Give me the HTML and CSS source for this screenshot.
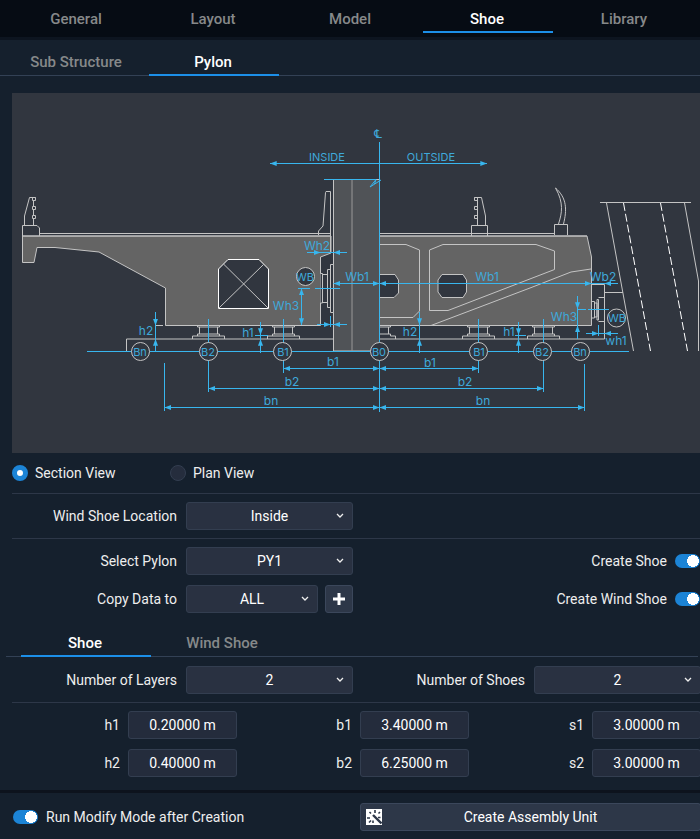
FILE: index.html
```html
<!DOCTYPE html>
<html lang="en">
<head>
    <meta charset="UTF-8">
    <meta name="viewport" content="width=device-width, initial-scale=1.0">
    <title>Shoe - Pylon</title>
    <link rel="stylesheet" href="styles.css">
</head>

<body>

    <nav class="main-tabs">
        <button class="tab">General</button>
        <button class="tab">Layout</button>
        <button class="tab">Model</button>
        <button class="tab active">Shoe</button>
        <button class="tab">Library</button>
    </nav>

    <nav class="sub-tabs">
        <button class="tab">Sub Structure</button>
        <button class="tab active">Pylon</button>
    </nav>

    <main class="content">
        <svg class="diagram" viewBox="12 93 688 360" role="img" aria-label="Pylon section view">
            <defs>
                <marker id="arrow" viewBox="0 0 8 6" refX="8" refY="3" markerWidth="7" markerHeight="5" markerUnits="userSpaceOnUse" orient="auto-start-reverse">
                    <path d="M0 0L8 3L0 6Z" fill="#38b6ee"/>
                </marker>
                <g id="bearing">
                    <path d="M-11 0V1H11V0M-9 1V8M9 1V8M-11 10V8H11V10M-16 13V10H16V13"/>
                </g>
            </defs>

            <!-- deck -->
            <g class="outline">
                <path class="concrete" d="M22.5 236V262.5H34L37 247.5H55L99 252L165.5 288V325.5H320.5V257L331 253V236Z"/>
                <path class="concrete" d="M379.5 236H587L591.5 257V325.5H379.5Z"/>
                <path d="M39.5 233.5H331M379.5 233.5H554.5M22.5 236H331M379.5 236H587"/>
                <path class="pylon" d="M333.5 351V179.5H379.5V351Z"/>
                <path class="pylon-edge" d="M352 180V351"/>
            </g>

            <!-- openings -->
            <g class="outline">
                <path class="opening bright" d="M218.5 308.5V269L228 259.5H259L268.5 269V308.5Z"/>
                <path d="M218.5 308.5L263.5 264.5M223.5 264L268.5 308.5"/>
                <path d="M379.5 244.5H406L419.5 250V311L413 317.5H379.5"/>
                <path d="M429.5 310.5V250L443 244.5H536L554.5 251V269.5L448 310.5Z"/>
                <path d="M431 325.5L530 288L571 272L591 269"/>
                <path class="opening" d="M379.5 274.5H395L398.5 280V293L394 297.5H379.5"/>
                <path class="opening" d="M438 280L442 274.5H463L466.5 280V292L463 297.5H442L438 292Z"/>
            </g>

            <!-- barriers -->
            <g class="outline">
                <path d="M22.5 236V225.5H37L39.5 228V236M24.5 225V216L29.5 197.5H35.5M33.5 201V206M33.5 210V215M33.5 219V225"/>
                <path d="M32.5 197.5H35.5V200.5H32.5ZM32.5 206.5H35.5V209.5H32.5ZM32.5 215.5H35.5V218.5H32.5Z"/>
                <path d="M318.5 235V231L323 226L325.5 192.5L326 191.5H330.5V253"/>
                <path d="M471.5 236V225.5H487.5V236M485.5 225V216L481.5 197.5H474.5M477.5 198V225"/>
                <path d="M474.5 197.5H477.5V200.5H474.5ZM474.5 206.5H477.5V209.5H474.5ZM474.5 215.5H477.5V218.5H474.5Z"/>
                <path d="M554.5 235V224.5H567.5V235M558.5 224C562 213 564 203 555.5 188C567 198 567 210 563.5 224"/>
            </g>

            <!-- platform, bearings and wind shoes -->
            <g class="outline">
                <path d="M126.5 351V339H333M379.5 339H604.5V284.5H591.5M604.5 292.5H623"/>
                <use href="#bearing" x="208.5" y="326"/>
                <use href="#bearing" x="283.5" y="326"/>
                <use href="#bearing" x="478.5" y="326"/>
                <use href="#bearing" x="543.5" y="326"/>
                <path d="M390.5 326V327H380M388.5 327V334M380 334H390.5V336H395.5V339"/>
                <path class="opening" d="M320.5 273.5H322.5V303H320.5M322.5 274.5H327.5V302.5H322.5M327.5 269.5H330.5V307.5H327.5ZM330.5 264.5H333.5V312.5H330.5Z"/>
                <path d="M591.5 301.5H594.5V318H591.5M594.5 303H597V317H594.5M597 299.5H598.5V320H597ZM598.5 297.5H604.5V321.5H598.5"/>
            </g>

            <!-- stay cables -->
            <g class="outline">
                <path d="M600 202.5H691M606.5 203L633.5 351M684.5 203L698.5 281V351"/>
                <path class="cable" d="M623.5 203L650.5 351M660.5 203L687.5 351"/>
            </g>

            <!-- dimension lines -->
            <g class="dim">
                <path d="M379.5 142V412M324 179.5H376L370 187L381 180M374.5 184L376 179.5M87 351.5H629"/>
                <path d="M283.5 319V373M208.5 319V392M164.5 363V411M478.5 319V373M543.5 319V392M584.5 364V411"/>
                <path d="M298 288.5H310M315 288.5H340M330.5 316V327M255 335.5H268M515 335.5H526M577 309.5H586M588 309.5H609M598.5 325V336"/>
                <path d="M155.5 325V340M260.5 334V340M419.5 325V340M518.5 334V340M320 252.5H334M330 324.5H334M591 283.5H605M598 333.5H605M577.5 309V326"/>
            </g>
            <g class="dim both">
                <path d="M270 163.5H487"/>
                <path d="M333.5 283.5H379.5"/>
                <path d="M379.5 283.5H591.5"/>
                <path d="M283.5 368.5H379.5"/>
                <path d="M379.5 368.5H478.5"/>
                <path d="M208.5 388.5H379.5"/>
                <path d="M379.5 388.5H543.5"/>
                <path d="M164.5 407.5H379.5"/>
                <path d="M379.5 407.5H584.5"/>
                <path d="M301.5 288.5V325"/>
            </g>
            <g class="dim end">
                <path d="M307 252.5H320.5"/>
                <path d="M347 252.5H333.5"/>
                <path d="M317 324.5H330.5"/>
                <path d="M347 324.5H333.5"/>
                <path d="M155.5 312V325.5"/>
                <path d="M155.5 352V339"/>
                <path d="M260.5 322V335"/>
                <path d="M260.5 353V339"/>
                <path d="M419.5 312V325"/>
                <path d="M419.5 353V339"/>
                <path d="M518.5 322V335"/>
                <path d="M518.5 353V339"/>
                <path d="M618 283.5H604.5"/>
                <path d="M577.5 296V309"/>
                <path d="M577.5 339V325.5"/>
                <path d="M586 333.5H598.5"/>
                <path d="M618 333.5H604.5"/>
            </g>

            <g class="outline">
                <path d="M156 325.5H163"/>
            </g>

            <g class="node">
                <circle cx="140.5" cy="351.5" r="9"/>
                <circle cx="208.5" cy="351.5" r="9"/>
                <circle cx="282.5" cy="351.5" r="9"/>
                <circle cx="379.5" cy="351.5" r="9"/>
                <circle cx="478.5" cy="351.5" r="9"/>
                <circle cx="542.5" cy="351.5" r="9"/>
                <circle cx="580.5" cy="351.5" r="9"/>
                <circle cx="305.5" cy="276.5" r="9"/>
                <circle class="clear" cx="616.5" cy="318" r="9"/>
            </g>

            <g class="dim-text">
                <text class="centerline" x="378" y="138">℄</text>
                <text class="side" x="327" y="161">INSIDE</text>
                <text class="side" x="431" y="161">OUTSIDE</text>
                <text x="317" y="250">Wh2</text>
                <text x="357" y="281">Wb1</text>
                <text x="487" y="281">Wb1</text>
                <text x="603" y="281">Wb2</text>
                <text x="286" y="310">Wh3</text>
                <text x="564" y="321">Wh3</text>
                <text x="616" y="345">wh1</text>
                <text x="146" y="335">h2</text>
                <text x="248" y="337">h1</text>
                <text x="410" y="336">h2</text>
                <text x="509" y="336">h1</text>
                <text x="333" y="366">b1</text>
                <text x="430" y="367">b1</text>
                <text x="292" y="386">b2</text>
                <text x="465" y="386">b2</text>
                <text x="271" y="405">bn</text>
                <text x="483" y="405">bn</text>
                <text class="side" x="305" y="281">WB</text>
                <text class="side" x="617" y="322">WB</text>
                <text class="side" x="140" y="356">Bn</text>
                <text class="side" x="208" y="356">B2</text>
                <text class="side" x="283" y="356">B1</text>
                <text class="side" x="379" y="356">B0</text>
                <text class="side" x="479" y="356">B1</text>
                <text class="side" x="542" y="356">B2</text>
                <text class="side" x="580" y="356">Bn</text>
            </g>
        </svg>

        <div class="view-row">
            <label class="radio"><input type="radio" name="view" checked>Section View</label>
            <label class="radio"><input type="radio" name="view">Plan View</label>
        </div>

        <div class="row">
            <div class="field">
                <label for="wind-location">Wind Shoe Location</label>
                <select id="wind-location"><option>Inside</option><option>Outside</option></select>
            </div>
        </div>

        <div class="row pylon-row">
            <div class="field">
                <label for="select-pylon">Select Pylon</label>
                <select id="select-pylon"><option>PY1</option><option>PY2</option></select>
            </div>
            <label class="switch">Create Shoe<input type="checkbox" checked></label>
            <div class="field">
                <label for="copy-to">Copy Data to</label>
                <div class="copy">
                    <select id="copy-to"><option>ALL</option><option>PY2</option></select>
                    <button class="add-button" aria-label="Add">
                        <svg width="14" height="14" viewBox="0 0 14 14"><path d="M7 1V13M1 7H13" stroke="#fff" stroke-width="3"/></svg>
                    </button>
                </div>
            </div>
            <label class="switch">Create Wind Shoe<input type="checkbox" checked></label>
        </div>
    </main>

    <nav class="shoe-tabs">
        <button class="tab active">Shoe</button>
        <button class="tab">Wind Shoe</button>
    </nav>

    <section class="content">
        <div class="row">
            <div class="field">
                <label for="layers">Number of Layers</label>
                <select id="layers"><option>2</option><option>3</option></select>
            </div>
            <div class="field">
                <label for="shoes">Number of Shoes</label>
                <select id="shoes"><option>2</option><option>3</option></select>
            </div>
        </div>

        <div class="values">
            <div class="field"><label for="h1">h1</label><input type="text" id="h1" value="0.20000 m"></div>
            <div class="field"><label for="b1">b1</label><input type="text" id="b1" value="3.40000 m"></div>
            <div class="field"><label for="s1">s1</label><input type="text" id="s1" value="3.00000 m"></div>
            <div class="field"><label for="h2">h2</label><input type="text" id="h2" value="0.40000 m"></div>
            <div class="field"><label for="b2">b2</label><input type="text" id="b2" value="6.25000 m"></div>
            <div class="field"><label for="s2">s2</label><input type="text" id="s2" value="3.00000 m"></div>
        </div>
    </section>

    <footer>
        <label class="switch"><input type="checkbox" checked>Run Modify Mode after Creation</label>
        <button class="create-button">
            <svg width="16" height="16" viewBox="0 0 16 16">
                <path d="M0 0H16V16H0Z" fill="#fff"/>
                <path d="M7 6L15.5 14.5" stroke="#2d3748" stroke-width="2.4"/>
                <path d="M9 1V4M3.5 3L5 4.500M1 9H4M14 3L12.500 4.500M12 8.500H14.500M7 11.500V14M3 13.500L5 11.500" stroke="#2d3748" stroke-width="1.6"/>
            </svg>
            <span>Create Assembly Unit</span>
        </button>
    </footer>

</body>
</html>
```
FILE: styles.css
```css
* {
    box-sizing: border-box;
}
body {
    margin: 0;
    overflow-x: hidden;
    font-family: Roboto, sans-serif;
    font-size: 14px;
    background-color: #15202d;
    color: #eee;
}
button,
input,
select {
    font: inherit;
    color: #fff;
}

/* tabs */
.main-tabs,
.sub-tabs,
.shoe-tabs {
    display: flex;
    gap: 7px;
}
.main-tabs {
    height: 40px;
    padding: 7px 10px 4px 12px;
    background: #060c14;
    border-bottom: 3px solid #0d1520;
}
.sub-tabs {
    height: 36px;
    padding: 9px 12px 0;
    border-bottom: 1px solid #334155;
}
.shoe-tabs {
    height: 27px;
    margin: 9px 2px 0 6px;
    padding: 0 15px;
    border-bottom: 1px solid #334155;
}
.tab {
    width: 130px;
    padding: 0 2px 0 0;
    border: none;
    border-bottom: 2px solid transparent;
    background: none;
    color: #86898a;
    font-size: 15px;
    font-weight: 500;
    cursor: pointer;
}
.main-tabs .tab {
    flex: 1;
}
.sub-tabs .tab,
.shoe-tabs .tab {
    margin-bottom: -1px;
}
.tab.active {
    color: #fff;
    border-bottom-color: #1c8fe8;
}

/* the right edge of the fields runs under the window border */
.content {
    margin: 0 -1px 0 12px;
}
.diagram {
    display: block;
    width: calc(100% - 1px);
    margin-top: 17px;
    background: #31363f;
}
.outline {
    fill: none;
    stroke: #c4c4c4;
}
.concrete {
    fill: #646464;
}
.pylon {
    fill: #505357;
}
.pylon-edge {
    stroke: #999;
}
.opening {
    fill: #31363f;
}
.bright {
    stroke: #fff;
}
.cable {
    stroke: #fff;
    stroke-dasharray: 8 3;
}
.dim {
    fill: none;
    stroke: #38b6ee;
}
.both path {
    marker-start: url(#arrow);
    marker-end: url(#arrow);
}
.end path {
    marker-end: url(#arrow);
}
.node {
    fill: #31363f;
    stroke: #c4c4c4;
}
.node .clear {
    fill: none;
}
.dim-text {
    fill: #3fa9da;
    font-family: Inter, sans-serif;
    font-size: 12px;
    text-anchor: middle;
}
.dim-text .side {
    font-size: 11px;
}
.dim-text .centerline {
    font-family: "DejaVu Sans", sans-serif;
}

/* form rows */
.view-row {
    display: flex;
    height: 41px;
    border-bottom: 1px solid #2d3748;
}
.radio {
    display: flex;
    align-items: center;
    gap: 7px;
    width: 158px;
}
.radio input {
    appearance: none;
    width: 16px;
    height: 16px;
    margin: 0;
    border: 1px solid #333e50;
    border-radius: 50%;
    background: #252d3d;
}
.radio input:checked {
    border: 5px solid #1c84d6;
    background: #fff;
}
.row {
    display: grid;
    grid-template-columns: 1fr 1fr;
    gap: 10px 7px;
    padding: 8px 0;
    border-bottom: 1px solid #2d3748;
}
.pylon-row {
    border-bottom: none;
}
.content .row:first-child {
    padding-top: 9px;
}
.field {
    display: flex;
    align-items: center;
    justify-content: flex-end;
    gap: 9px;
}
select,
.field input {
    height: 28px;
    border: 1px solid #333e50;
    border-radius: 3px;
    background-color: #293141;
}
select {
    appearance: none;
    width: 167px;
    padding: 0 20px;
    text-align: center;
    text-align-last: center;
    background-image: url("data:image/svg+xml,%3Csvg xmlns='http://www.w3.org/2000/svg' width='8' height='6'%3E%3Cpath d='M1 1L4 4L7 1' fill='none' stroke='%23eee' stroke-width='1.3'/%3E%3C/svg%3E");
    background-repeat: no-repeat;
    background-position: right 8px center;
}
.field input {
    width: 109px;
    padding: 0;
    text-align: center;
    background-color: #242c3c;
}
.copy {
    display: flex;
    gap: 7px;
    width: 167px;
}
.copy select {
    flex: 1;
    width: auto;
}
.add-button {
    display: flex;
    align-items: center;
    justify-content: center;
    width: 28px;
    height: 28px;
    padding: 0;
    border: 1px solid #3b475b;
    border-radius: 3px;
    background: #2d3748;
}
.switch {
    display: flex;
    align-items: center;
    justify-content: flex-end;
    gap: 8px;
    padding-right: 1px;
}
.switch input {
    appearance: none;
    width: 25px;
    height: 14px;
    margin: 0;
    border-radius: 7px;
    background: #1c84d6 radial-gradient(circle at 18px 7px, #fff 6px, transparent 6px);
}
.values {
    display: grid;
    grid-template-columns: repeat(3, 1fr);
    gap: 10px 7px;
    padding: 8px 0 13px;
}
.values .field {
    gap: 8px;
}

footer {
    display: grid;
    grid-template-columns: 1fr 1fr;
    gap: 7px;
    padding: 10px 0 8px 12px;
    margin-right: -1px;
    border-top: 3px solid #0d131d;
}
footer .switch {
    justify-content: flex-start;
    padding-left: 1px;
}
.create-button {
    display: flex;
    align-items: center;
    height: 28px;
    padding: 0 21px 0 5px;
    border: 1px solid #3b475b;
    border-radius: 3px;
    background: #2d3748;
}
.create-button span {
    flex: 1;
}
```
